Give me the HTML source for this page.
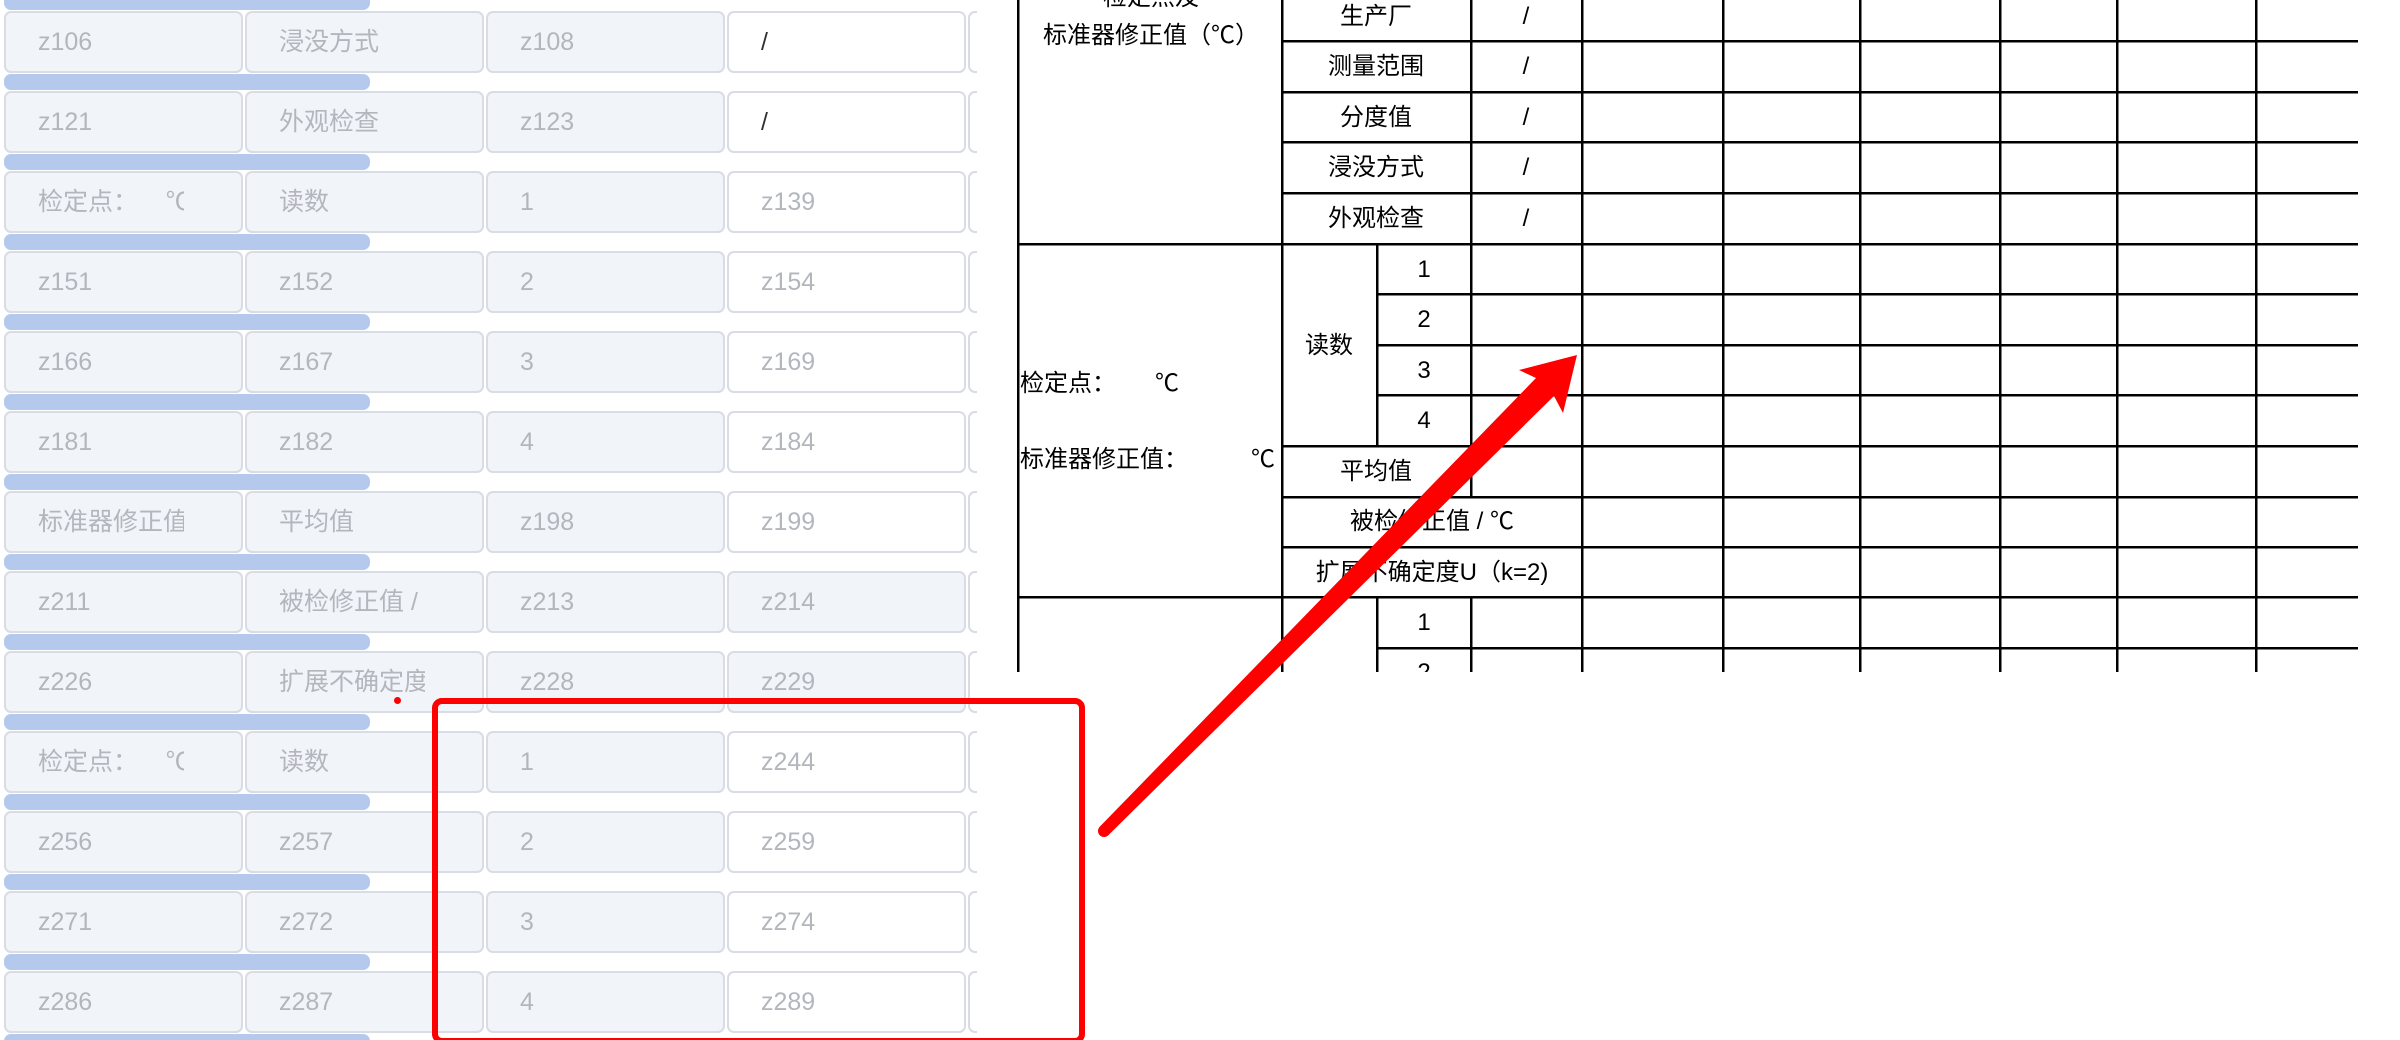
<!DOCTYPE html>
<html style="overflow:hidden;width:2400px;height:1040px"><head><meta charset="utf-8"><style>
html,body{margin:0;padding:0}
#root{width:2400px;height:1040px;overflow:hidden;background:#fff;position:relative;font-family:"Liberation Sans","Noto Sans CJK SC",sans-serif}
.panel{position:absolute;left:0;top:0;width:977px;height:1040px;overflow:hidden}
.c{position:absolute;height:58px;width:235px;box-sizing:content-box;border:2px solid #d9dce5;border-radius:7px;background:#f1f4f9;color:#b3b6bd;font-size:25px;line-height:58px;white-space:nowrap;overflow:hidden}
.c span{position:absolute;left:32px;width:146px;overflow:hidden}
.w{background:#fff}
.k{color:#333}
.bar{position:absolute;left:4px;width:366px;height:16px;border-radius:7px;background:#b4c9eb}
.t{position:absolute;font-size:24px;color:#000;white-space:nowrap;line-height:1}
.tbl{position:absolute;left:0;top:0;width:2400px;height:672px;overflow:hidden}
</style></head><body>
<div id="root">
<div class="panel" id="p"></div>
<div class="tbl">
<svg width="2400" height="672" style="position:absolute;left:0;top:0" stroke="#000" stroke-width="2.5" shape-rendering="crispEdges">
<line x1="1018" y1="0" x2="1018" y2="672"/>
<line x1="1282" y1="0" x2="1282" y2="672"/>
<line x1="1377" y1="244" x2="1377" y2="446"/>
<line x1="1377" y1="597" x2="1377" y2="672"/>
<line x1="1471" y1="0" x2="1471" y2="497"/>
<line x1="1471" y1="597" x2="1471" y2="672"/>
<line x1="1582" y1="0" x2="1582" y2="672"/>
<line x1="1723" y1="0" x2="1723" y2="672"/>
<line x1="1860" y1="0" x2="1860" y2="672"/>
<line x1="2000" y1="0" x2="2000" y2="672"/>
<line x1="2117" y1="0" x2="2117" y2="672"/>
<line x1="2256" y1="0" x2="2256" y2="672"/>
<line x1="1282" y1="41" x2="2358" y2="41"/>
<line x1="1282" y1="92" x2="2358" y2="92"/>
<line x1="1282" y1="142" x2="2358" y2="142"/>
<line x1="1282" y1="193" x2="2358" y2="193"/>
<line x1="1018" y1="244" x2="2358" y2="244"/>
<line x1="1377" y1="294" x2="2358" y2="294"/>
<line x1="1377" y1="345" x2="2358" y2="345"/>
<line x1="1377" y1="395" x2="2358" y2="395"/>
<line x1="1282" y1="446" x2="2358" y2="446"/>
<line x1="1282" y1="497" x2="2358" y2="497"/>
<line x1="1282" y1="547" x2="2358" y2="547"/>
<line x1="1018" y1="597" x2="2358" y2="597"/>
<line x1="1377" y1="648" x2="2358" y2="648"/>
</svg>
<div class="t" style="left:1151px;top:-14px;transform:translateX(-50%)">检定点及</div>
<div class="t" style="left:1151px;top:24px;transform:translateX(-50%)">标准器修正值（℃）</div>
<div class="t" style="left:1376px;top:5px;transform:translateX(-50%)">生产厂</div>
<div class="t" style="left:1376px;top:55px;transform:translateX(-50%)">测量范围</div>
<div class="t" style="left:1376px;top:106px;transform:translateX(-50%)">分度值</div>
<div class="t" style="left:1376px;top:156px;transform:translateX(-50%)">浸没方式</div>
<div class="t" style="left:1376px;top:207px;transform:translateX(-50%)">外观检查</div>
<div class="t" style="left:1526px;top:5px;transform:translateX(-50%)">/</div>
<div class="t" style="left:1526px;top:55px;transform:translateX(-50%)">/</div>
<div class="t" style="left:1526px;top:106px;transform:translateX(-50%)">/</div>
<div class="t" style="left:1526px;top:156px;transform:translateX(-50%)">/</div>
<div class="t" style="left:1526px;top:207px;transform:translateX(-50%)">/</div>
<div class="t" style="left:1329px;top:334px;transform:translateX(-50%)">读数</div>
<div class="t" style="left:1424px;top:258px;transform:translateX(-50%)">1</div>
<div class="t" style="left:1424px;top:308px;transform:translateX(-50%)">2</div>
<div class="t" style="left:1424px;top:359px;transform:translateX(-50%)">3</div>
<div class="t" style="left:1424px;top:409px;transform:translateX(-50%)">4</div>
<div class="t" style="left:1376px;top:460px;transform:translateX(-50%)">平均值</div>
<div class="t" style="left:1432px;top:510px;transform:translateX(-50%)">被检修正值 / ℃</div>
<div class="t" style="left:1432px;top:561px;transform:translateX(-50%)">扩展不确定度U（k=2)</div>
<div class="t" style="left:1020px;top:372px">检定点：</div>
<div class="t" style="left:1155px;top:372px">℃</div>
<div class="t" style="left:1020px;top:448px">标准器修正值：</div>
<div class="t" style="left:1251px;top:448px">℃</div>
<div class="t" style="left:1424px;top:611px;transform:translateX(-50%)">1</div>
<div class="t" style="left:1424px;top:661px;transform:translateX(-50%)">2</div>
</div>
<div style="position:absolute;left:432px;top:698px;width:641px;height:334px;border:6px solid #fe0000;border-radius:10px"></div>
<div style="position:absolute;left:394px;top:697px;width:7px;height:7px;border-radius:50%;background:#fe0000"></div>
<svg width="2400" height="1040" style="position:absolute;left:0;top:0">
<polygon fill="#fe0000" points="1099.7,826.8 1536,378 1519,370 1577,355 1563,413 1554,396 1108.3,835.2"/>
<circle cx="1104" cy="831" r="6" fill="#fe0000"/>
</svg>
</div>
<script>
var rows=[["z106","浸没方式","z108","/"],["z121","外观检查","z123","/"],["检定点：&nbsp;&nbsp;&nbsp;&nbsp;℃","读数","1","z139"],["z151","z152","2","z154"],["z166","z167","3","z169"],["z181","z182","4","z184"],["标准器修正值","平均值","z198","z199"],["z211","被检修正值 /","z213","z214"],["z226","扩展不确定度","z228","z229"],["检定点：&nbsp;&nbsp;&nbsp;&nbsp;℃","读数","1","z244"],["z256","z257","2","z259"],["z271","z272","3","z274"],["z286","z287","4","z289"]];
var h='<div class="bar" style="top:-6px"></div>';
var xs=[4,245,486,727,968];
for(var k=0;k<rows.length;k++){var y=11+80*k;
for(var j=0;j<5;j++){var cls='c';if(j==3&&k!=7&&k!=8)cls+=' w';if(j==4)cls+=' w';
var txt=j<4?rows[k][j]:'';var tc=(j==3&&k<2)?' class="k"':'';
h+='<div class="'+cls+'" style="left:'+xs[j]+'px;top:'+y+'px"><span'+tc+'>'+txt+'</span></div>';}
h+='<div class="bar" style="top:'+(y+63)+'px"></div>';}
document.getElementById('p').innerHTML=h;
</script>
</body></html>
